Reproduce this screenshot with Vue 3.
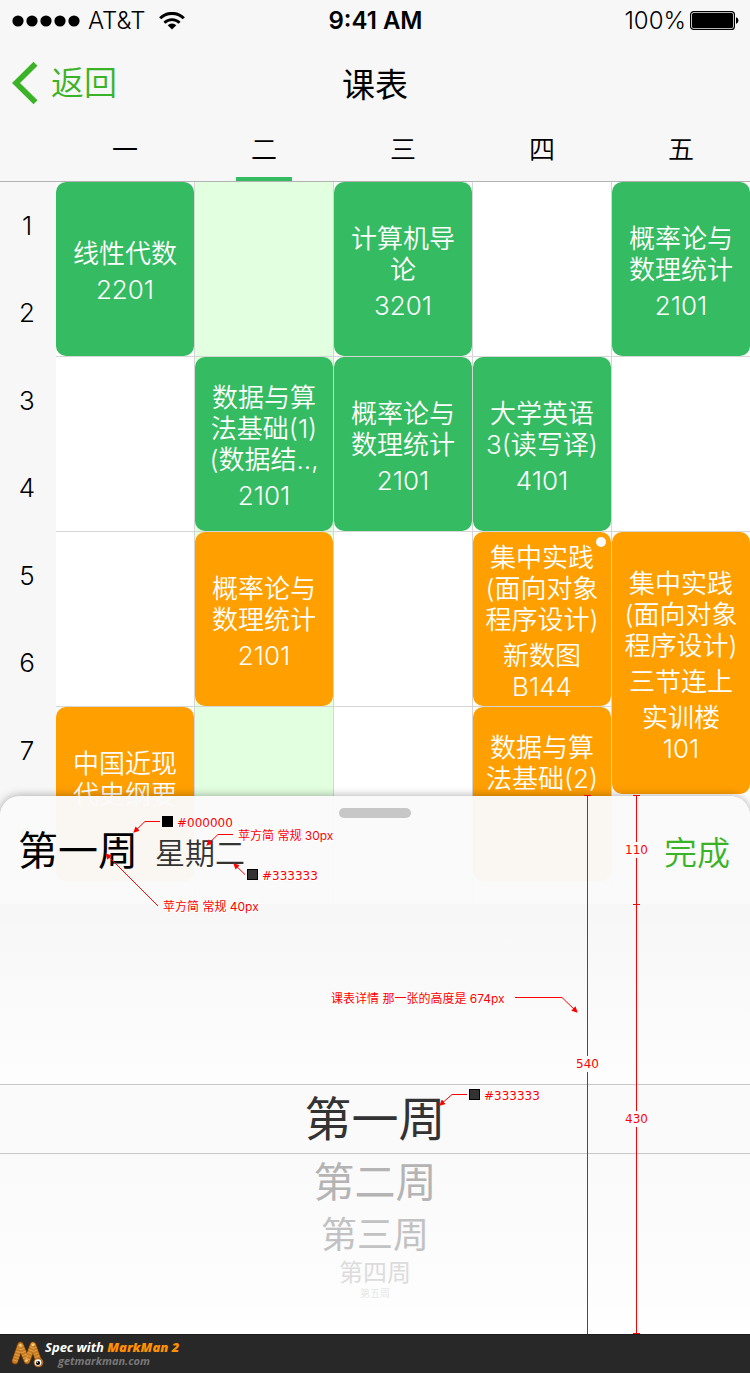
<script setup>
import { ref } from 'vue'

const days = ['一', '二', '三', '四', '五']
const today = ref(1)
const slots = Array.from({ length: 12 }, (_, i) => i + 1)

const courses = [
  { day: 0, start: 1, span: 2, color: 'green', lines: ['线性代数', '2201'] },
  { day: 2, start: 1, span: 2, color: 'green', lines: ['计算机导\n论', '3201'] },
  { day: 4, start: 1, span: 2, color: 'green', lines: ['概率论与\n数理统计', '2101'] },
  { day: 1, start: 3, span: 2, color: 'green', lines: ['数据与算\n法基础(1)\n(数据结..,', '2101'] },
  { day: 2, start: 3, span: 2, color: 'green', lines: ['概率论与\n数理统计', '2101'] },
  { day: 3, start: 3, span: 2, color: 'green', lines: ['大学英语\n3(读写译)', '4101'] },
  { day: 1, start: 5, span: 2, color: 'orange', lines: ['概率论与\n数理统计', '2101'] },
  { day: 3, start: 5, span: 2, color: 'orange', dot: true, lines: ['集中实践\n(面向对象\n程序设计)', '新数图\nB144'] },
  { day: 4, start: 5, span: 3, color: 'orange', lines: ['集中实践\n(面向对象\n程序设计)', '三节连上', '实训楼\n101'] },
  { day: 0, start: 7, span: 2, color: 'orange', lines: ['中国近现\n代史纲要', ''] },
  { day: 3, start: 7, span: 2, color: 'orange', lines: ['数据与算\n法基础(2)\n\u00a0', ''] },
]

const weeks = ['第一周', '第二周', '第三周', '第四周', '第五周']

// A one-pixel divider track follows every second slot.
const track = (slot) => slot + Math.floor((slot - 1) / 2)
const place = (c) => ({
  gridColumn: c.day + 1,
  gridRow: `${track(c.start)} / ${track(c.start + c.span - 1) + 1}`,
})
const cellPlace = (pair, day) => ({ gridColumn: day, gridRow: `${pair * 3 - 2} / span 2` })
</script>

<template>
  <div class="page">
    <main class="screen">
      <header class="top">
        <div class="status">
          <div class="carrier">
            <svg class="signal" width="68" height="12" viewBox="0 0 68 12" aria-hidden="true">
              <circle v-for="n in 5" :key="n" :cx="n * 14 - 8" cy="6" r="5.6" />
            </svg>
            <span>AT&amp;T</span>
            <svg class="wifi" width="26" height="18" viewBox="0 0 26 18" aria-hidden="true">
              <path d="M1.2 6.3a16.6 16.6 0 0 1 23.6 0" fill="none" stroke="#000" stroke-width="3" />
              <path d="M5.4 10.7a10.7 10.7 0 0 1 15.2 0" fill="none" stroke="#000" stroke-width="2.8" />
              <path d="M13 17.5 8.7 13.2a6.1 6.1 0 0 1 8.6 0z" />
            </svg>
          </div>
          <strong class="clock">9:41 AM</strong>
          <div class="power">
            <span>100%</span>
            <svg width="49" height="19" viewBox="0 0 49 19" aria-hidden="true">
              <rect x=".6" y=".6" width="43.8" height="17.8" rx="3" fill="none" stroke="#000" stroke-width="1.2" />
              <rect x="2" y="2" width="41" height="15" rx="1.5" />
              <path d="M46 6.2c3.2.8 3.2 5.800 0 6.600z" />
            </svg>
          </div>
        </div>
        <nav class="nav">
          <button class="back" type="button">
            <svg width="27" height="44" viewBox="0 0 27 44" aria-hidden="true">
              <path d="M23.500 2.700 4 22l19.500 19.300" fill="none" stroke="currentColor" stroke-width="5.600" />
            </svg>
            返回
          </button>
          <h1>课表</h1>
        </nav>
        <div class="days">
          <button
            v-for="(d, i) in days" :key="d" type="button"
            class="day" :class="{ active: i === today }" @click="today = i"
          >{{ d }}</button>
        </div>
      </header>

      <section class="schedule">
        <div class="slots">
          <span v-for="s in slots" :key="s" :style="{ gridRow: track(s) }">{{ s }}</span>
        </div>
        <div class="grid">
          <template v-for="p in 6" :key="p">
            <div
              v-for="d in 5" :key="d" class="cell"
              :class="{ today: d - 1 === today }" :style="cellPlace(p, d)"
            ></div>
          </template>
          <article v-for="(c, i) in courses" :key="i" class="course" :class="c.color" :style="place(c)">
            <p v-for="l in c.lines" :key="l">{{ l }}</p>
            <i v-if="c.dot" class="dot"></i>
          </article>
        </div>
      </section>

      <section class="sheet">
        <div class="handle"></div>
        <header class="sheet-head">
          <h2>第一周</h2>
          <p>星期二</p>
          <button type="button">完成</button>
        </header>
        <ul class="picker" role="listbox" aria-label="周">
          <li
            v-for="(w, i) in weeks" :key="w" role="option"
            :aria-selected="i === 0" :class="`w${i + 1}`"
          >{{ w }}</li>
        </ul>

        <svg class="notes" width="750" height="538" viewBox="0 796 750 538">
          <defs>
            <marker id="tip" viewBox="0 0 6 6" refX="5" refY="3" markerWidth="6" markerHeight="6" markerUnits="userSpaceOnUse" orient="auto">
              <path d="M0 0 6 3 0 6z" fill="#f00" />
            </marker>
          </defs>
          <g class="rule" shape-rendering="crispEdges">
            <path d="M587.500 796V1056M587.500 1072V1334M584 795.500h7" />
            <path d="M636.500 796V842M636.500 858V1111M636.500 1127V1334M633 795.500h7M633 904.500h7M633 1333.500h7" />
          </g>
          <g class="rule">
            <path d="M160 821.500H145L134 832" marker-end="url(#tip)" />
            <path d="M233 834.500H218L207 845" marker-end="url(#tip)" />
            <path d="M245 874.500 234 864" marker-end="url(#tip)" />
            <path d="M158 906 106 854" marker-end="url(#tip)" />
            <path d="M515 997.500H562L577 1012" marker-end="url(#tip)" />
            <path d="M467 1094.500H452L440 1105" marker-end="url(#tip)" />
          </g>
          <rect x="162.500" y="816.500" width="10" height="10" fill="#000" stroke="#000" />
          <rect x="247.500" y="869.500" width="10" height="10" fill="#333" stroke="#000" />
          <rect x="469.500" y="1089.500" width="10" height="10" fill="#333" stroke="#000" />
          <g class="num">
            <text x="177" y="827">#000000</text>
            <text x="262" y="880">#333333</text>
            <text x="484" y="1100">#333333</text>
            <text x="625" y="854">110</text>
            <text x="576" y="1068">540</text>
            <text x="625" y="1123">430</text>
          </g>
          <g class="cn">
            <text x="238" y="840">苹方简 常规 30px</text>
            <text x="163" y="911">苹方简 常规 40px</text>
            <text x="331" y="1003">课表详情 那一张的高度是 674px</text>
          </g>
        </svg>
      </section>
    </main>

    <footer class="credit">
      <svg width="33" height="28" viewBox="0 0 33 28" aria-hidden="true">
        <g fill="none" stroke-linecap="round" stroke-linejoin="round">
          <path d="M4 21 9.500 5l6.500 16 6-16 6 17" stroke="#6b3809" stroke-width="7" />
          <path d="M4 21 9.500 5l6.500 16 6-16 6 17" stroke="#c67a20" stroke-width="5.400" />
          <path d="M4 21 9.500 5l6.500 16 6-16 6 17" stroke="#e0a048" stroke-width="5" stroke-dasharray="1 2" stroke-linecap="butt" />
        </g>
        <g fill="#f8cf80">
          <circle cx="9.500" cy="5" r="1.300" />
          <circle cx="15.500" cy="20.500" r="1.300" />
          <circle cx="22" cy="5" r="1.300" />
        </g>
        <circle cx="27.500" cy="22.500" r="4.800" fill="#b06c20" />
        <circle cx="27" cy="22.500" r="3.300" fill="#fff" />
        <circle cx="27" cy="23" r="2.100" fill="#000" />
        <circle cx="26.300" cy="22.200" r=".7" fill="#fff" />
      </svg>
      <div>
        <p>Spec with <b>MarkMan 2</b></p>
        <a href="#">getmarkman.com</a>
      </div>
    </footer>
  </div>
</template>

<style>
body {
  margin: 0;
}
</style>

<style scoped>
* {
  box-sizing: border-box;
}
h1, h2, p, ul {
  margin: 0;
  padding: 0;
  font-weight: 400;
}
button {
  padding: 0;
  border: 0;
  background: none;
  font: inherit;
  color: inherit;
}
.page {
  min-height: 100vh;
  display: flex;
  flex-direction: column;
  font-family: Inter, "Noto Sans CJK SC", sans-serif;
  color: #000;
}
.screen {
  position: relative;
  flex: 1;
  overflow: hidden;
  background: #f7f7f7;
}
.top {
  border-bottom: 1px solid #b2b2b2;
}
.status {
  height: 41px;
  padding: 0 11px 0 12px;
  display: grid;
  grid-template-columns: 1fr auto 1fr;
  align-items: center;
  font-size: 24px;
  font-weight: 350;
}
.carrier, .power {
  display: flex;
  align-items: center;
  gap: 8px;
}
.wifi {
  margin-left: 6px;
}
.clock {
  font-weight: 600;
}
.power {
  justify-content: flex-end;
  gap: 4px;
}
.nav {
  height: 83px;
  padding: 0 12px;
  display: grid;
  grid-template-columns: 1fr auto 1fr;
  align-items: center;
}
.back {
  display: flex;
  align-items: center;
  gap: 12px;
  color: #3bb327;
  font-size: 33px;
  font-weight: 350;
  line-height: 44px;
}
.nav h1 {
  padding-top: 4px;
  font-size: 33px;
  line-height: 44px;
}
.days {
  height: 57px;
  padding-left: 56px;
  display: grid;
  grid-template-columns: repeat(5, 1fr);
  column-gap: 1px;
}
.day {
  position: relative;
  padding-bottom: 10px;
  font-size: 26px;
  font-weight: 350;
}
.day.active::after {
  content: "";
  position: absolute;
  left: 50%;
  bottom: 0;
  width: 56px;
  height: 4px;
  margin-left: -28px;
  background: #35bb62;
}
.schedule {
  display: flex;
}
.slots, .grid {
  display: grid;
  grid-template-rows: repeat(6, 87px 87px 1px);
}
.slots {
  width: 56px;
  padding-right: 2px;
  font-size: 26px;
  font-weight: 350;
  text-align: center;
  line-height: 88px;
}
.grid {
  flex: 1;
  grid-template-columns: repeat(5, 1fr);
  column-gap: 1px;
  background: #d6d6d6;
}
.cell {
  background: #fff;
}
.cell.today {
  background: #e2ffdf;
}
.course {
  position: relative;
  padding-top: 5px;
  display: flex;
  flex-direction: column;
  justify-content: center;
  gap: 5px;
  border-radius: 10px;
  color: #fff;
  font-size: 26px;
  line-height: 31px;
  text-align: center;
  white-space: pre-line;
  overflow: hidden;
}
.course p {
  min-height: 31px;
  font-weight: 350;
}
.green {
  background: #35bb62;
}
.orange {
  background: #ff9f00;
}
.dot {
  position: absolute;
  top: 5px;
  right: 5px;
  width: 10px;
  height: 10px;
  border-radius: 50%;
  background: #fff;
}
.sheet {
  position: absolute;
  left: 0;
  right: 0;
  bottom: 0;
  border-radius: 20px 20px 0 0;
  background: rgba(250, 250, 250, 0.97);
  box-shadow: 0 0 10px rgba(0, 0, 0, 0.35);
}
.handle {
  position: absolute;
  top: 12px;
  left: 50%;
  width: 72px;
  height: 10px;
  margin-left: -36px;
  border-radius: 5px;
  background: #c7c7c7;
}
.sheet-head {
  height: 108px;
  padding: 2px 20px 0 18px;
  display: flex;
  align-items: center;
  gap: 17px;
}
.sheet-head h2 {
  font-size: 40px;
  line-height: 60px;
}
.sheet-head p {
  color: #333;
  font-size: 30px;
  font-weight: 350;
}
.sheet-head button {
  margin-left: auto;
  color: #3bb327;
  font-size: 33px;
  font-weight: 350;
}
.picker {
  height: 430px;
  padding-top: 180px;
  list-style: none;
  text-align: center;
  background: linear-gradient(#f7f7f7, #fdfdfd 180px, #fafafa 181px, #fafafa 260px, #fdfdfd 390px, #fff);
}
.w1 {
  height: 70px;
  border: solid #c8c8c8;
  border-width: 1px 0;
  background: #fafafa;
  color: #333;
  font-size: 47px;
  line-height: 68px;
}
.w2 {
  height: 56px;
  color: #b4b4b4;
  font-size: 41px;
  line-height: 56px;
}
.w3 {
  height: 50px;
  color: #c2c2c2;
  font-size: 36px;
  line-height: 50px;
}
.w4 {
  height: 26px;
  color: #dcdcdc;
  font-size: 24px;
  line-height: 26px;
}
.w5 {
  height: 14px;
  color: #e8e8e8;
  font-size: 10px;
  line-height: 14px;
}
.notes {
  position: absolute;
  left: 0;
  top: 0;
  overflow: visible;
  pointer-events: none;
}
.rule {
  fill: none;
  stroke: #f00;
  stroke-width: 1;
}
.num, .cn {
  fill: #f00;
  stroke: #fff;
  stroke-width: 2px;
  paint-order: stroke;
  font-size: 12px;
}
.num {
  font-family: "DejaVu Sans", sans-serif;
}
.credit {
  height: 39px;
  padding-left: 11px;
  display: flex;
  align-items: center;
  gap: 1px;
  background: #282828;
  border-top: 1px solid #1c1c1c;
  font-family: "Open Sans", sans-serif;
  font-size: 13px;
  font-style: italic;
  font-weight: 700;
  line-height: 13px;
  color: #fff;
}
.credit p {
  font-weight: 700;
}
.credit b {
  color: #ff9000;
}
.credit a {
  display: block;
  padding-left: 13px;
  color: #777;
  font-size: 11px;
  text-decoration: none;
}
</style>
